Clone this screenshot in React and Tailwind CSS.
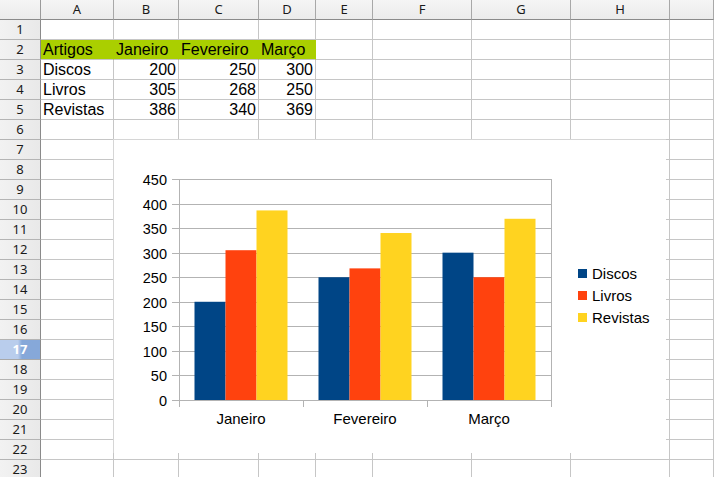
import React from "react";

const COLS = ["A", "B", "C", "D", "E", "F", "G", "H", ""];
const DATA = {
  2: ["Artigos", "Janeiro", "Fevereiro", "Março"],
  3: ["Discos", "200", "250", "300"],
  4: ["Livros", "305", "268", "250"],
  5: ["Revistas", "386", "340", "369"],
};

const SERIES = [
  { name: "Discos", color: "#004586", values: [200, 250, 300] },
  { name: "Livros", color: "#ff420e", values: [305, 268, 250] },
  { name: "Revistas", color: "#ffd320", values: [386, 340, 369] },
];
const CATS = ["Janeiro", "Fevereiro", "Março"];

function Chart() {
  // origin = (114,140) in page coordinates
  const x0 = 65;
  const top = 39;
  const bottom = 260;
  const right = 437;
  const h = bottom - top;
  const catW = (right - x0) / 3;
  const barW = catW / 4;
  const yOf = (v) => bottom - (v * h) / 450;
  const ticks = [0, 50, 100, 150, 200, 250, 300, 350, 400, 450];
  return (
    <svg width="552" height="313" className="block" style={{ fontFamily: '"Liberation Sans", Arial, sans-serif' }}>
      {ticks.map((t) => {
        const y = Math.round(yOf(t)) + 0.5;
        return (
          <g key={t}>
            <line x1={x0 - 7} x2={right} y1={y} y2={y} stroke="#b3b3b3" strokeWidth="1" />
            <text x={x0 - 12} y={y + 5} textAnchor="end" fontSize="14.5" fill="#000">
              {t}
            </text>
          </g>
        );
      })}
      <line x1={x0 + 0.5} x2={x0 + 0.5} y1={top} y2={bottom + 7} stroke="#b3b3b3" />
      <line x1={right + 0.5} x2={right + 0.5} y1={top} y2={bottom + 7} stroke="#b3b3b3" />
      {[1, 2].map((i) => (
        <line key={i} x1={Math.round(x0 + i * catW) + 0.5} x2={Math.round(x0 + i * catW) + 0.5} y1={bottom} y2={bottom + 7} stroke="#b3b3b3" />
      ))}
      {CATS.map((c, i) => (
        <g key={c}>
          {SERIES.map((s, j) => {
            const v = s.values[i];
            const x = x0 + i * catW + barW / 2 + j * barW;
            const y = yOf(v);
            return <rect key={s.name} x={x} y={y} width={barW} height={bottom - y} fill={s.color} />;
          })}
          <text x={x0 + i * catW + catW / 2} y={bottom + 24} textAnchor="middle" fontSize="15" fill="#000">
            {c}
          </text>
        </g>
      ))}
      {SERIES.map((s, j) => {
        const cy = 134 + j * 22;
        return (
          <g key={s.name}>
            <rect x={464} y={cy - 5} width={9} height={9} fill={s.color} />
            <text x={478} y={cy + 5} fontSize="15" fill="#000">
              {s.name}
            </text>
          </g>
        );
      })}
    </svg>
  );
}

export default function App() {
  const rows = Array.from({ length: 23 }, (_, i) => i + 1);
  return (
    <div className="relative w-[714px] h-[477px] overflow-hidden bg-white">
      <div
        className="grid grid-cols-[41px_73px_65px_80px_57px_57px_99px_99px_99px_1fr] auto-rows-[20px]"
        style={{ fontFamily: '"Liberation Sans", Arial, sans-serif' }}
      >
        {/* header row */}
        <div className="border-r border-b border-r-[#9a9a9a] border-b-[#8a8a8a] bg-gradient-to-b from-[#f5f5f5] to-[#ebebeb]" />
        {COLS.map((c, i) => (
          <div
            key={"h" + i}
            className="flex items-center justify-center border-r border-b border-r-[#a8a8a8] border-b-[#8a8a8a] bg-gradient-to-b from-[#f5f5f5] to-[#ebebeb] text-[13px] text-[#1a1a1a] font-['Noto_Sans',sans-serif]"
          >
            {c}
          </div>
        ))}
        {rows.map((r) => (
          <React.Fragment key={r}>
            <div
              className={
                r === 17
                  ? "flex items-center justify-center border-r border-b border-r-[#8a8a8a] border-b-[#a8a8a8] bg-gradient-to-r from-[#b9cdec] from-45% to-[#86a8d9] to-55% text-[13px] font-bold text-white font-['Noto_Sans',sans-serif]"
                  : "flex items-center justify-center border-r border-b border-r-[#8a8a8a] border-b-[#b4b4b4] bg-gradient-to-r from-[#f2f2f2] to-[#e9e9e9] text-[13px] text-[#1a1a1a] font-['Noto_Sans',sans-serif]"
              }
            >
              {r}
            </div>
            {COLS.map((_, c) => {
              const txt = DATA[r] ? DATA[r][c] : undefined;
              const green = r === 2 && c < 4;
              const num = r > 2 && c > 0;
              return (
                <div
                  key={c}
                  className={
                    "border-r border-b border-[#c6c6c6] px-[2px] pt-px text-[16px] leading-[18px] whitespace-nowrap text-black " +
                    (green ? "bg-[#aacf00] border-r-[#aacf00] " : "") +
                    (num ? "text-right" : "text-left")
                  }
                >
                  {txt}
                </div>
              );
            })}
          </React.Fragment>
        ))}
      </div>
      <div className="absolute left-[113px] top-[139px] w-[553px] h-[314px] bg-white border-l border-t border-[#d6d6d6]">
        <Chart />
      </div>
    </div>
  );
}
